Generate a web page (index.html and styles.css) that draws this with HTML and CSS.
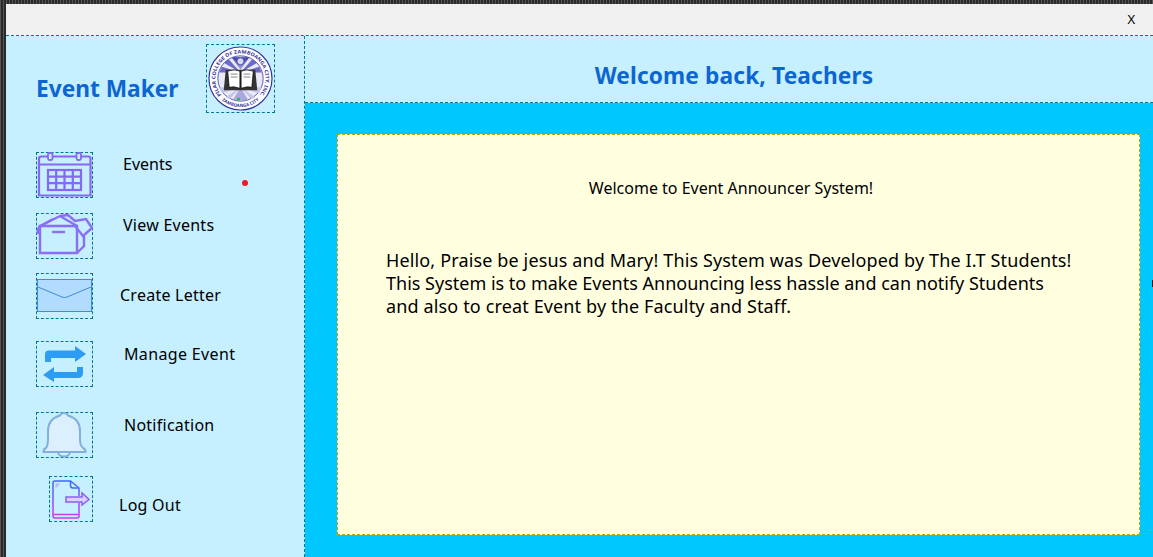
FILE: index.html
```html
<!DOCTYPE html>
<html lang="en">
<head>
<meta charset="utf-8">
<title>Event Maker</title>
<link rel="stylesheet" href="styles.css">
</head>
<body>
<div class="window">
  <div class="titlebar"><span class="close">X</span></div>
  <div class="content">
    <aside class="sidebar">
      <div class="brand">
        <h1 class="brand-name">Event Maker</h1>
        <div class="logo-box">
          <svg class="logo" viewBox="0 0 66 66">
            <defs>
              <path id="arcTop" d="M13.500 49.400A25.500 25.500 0 1 1 52.500 49.400"/>
              <path id="arcBottom" d="M12.500 53.500A29 29 0 0 0 53.500 53.500"/>
              <linearGradient id="ray" x1="0" y1="0" x2="0" y2="1">
                <stop offset="0" stop-color="#3b3ba6"/>
                <stop offset="1" stop-color="#a9a9e2"/>
              </linearGradient>
            </defs>
            <circle cx="33" cy="33" r="32" fill="#fff" stroke="#35359b" stroke-width="1.200"/>
            <circle cx="33" cy="33" r="23" fill="#e9e9f8" stroke="#35359b" stroke-width=".8"/>
            <text class="logo-text"><textPath href="#arcTop" startOffset="50%" text-anchor="middle" textLength="116" lengthAdjust="spacingAndGlyphs">PILAR COLLEGE OF ZAMBOANGA CITY, INC.</textPath></text>
            <text class="logo-text-small"><textPath href="#arcBottom" startOffset="50%" text-anchor="middle">ZAMBOANGA CITY</textPath></text>
            <path d="M33 24L24 11.500L42 11.500Z" fill="url(#ray)"/>
            <path d="M33 27L11.500 27L14 21ZM33 27L54.500 27L52 21ZM33 27L16 17L21 13.500ZM33 27L50 17L45 13.500Z" fill="#6b6bc4"/>
            <path d="M33 42L25 55L41 55Z" fill="#a9a9e0"/>
            <path d="M33 42L11.500 42L14 48ZM33 42L54.500 42L52 48ZM33 42L18 52L22 54ZM33 42L48 52L44 54Z" fill="#c4c4ec"/>
            <circle cx="33" cy="15.500" r="3.500" fill="#d9d9f2" stroke="#35359b" stroke-width=".7"/>
            <path d="M18 24H48L50 45H16Z" fill="#333"/>
            <path d="M20 25.500Q27 23 32.400 25.500V43Q26 40.500 21.500 42Z" fill="#fff" stroke="#111" stroke-width=".8"/>
            <path d="M46 25.500Q39 23 33.600 25.500V43Q40 40.500 44.500 42Z" fill="#fff" stroke="#111" stroke-width=".8"/>
            <path d="M23 28.500H30M23 31.500H30M36 28.500H43M36 31.500H43" stroke="#666" stroke-width=".8"/>
            <circle cx="31" cy="54" r="1.500" fill="#27b34a"/>
          </svg>
        </div>
      </div>
      <nav class="nav">
        <div class="nav-item item-events">
          <span class="icon-box">
            <svg class="icon" viewBox="0 0 57 46" fill="none" stroke="#8767f6" stroke-width="2.200">
              <path d="M3 43.500V6.500Q3 4.500 5.500 4.500H52Q54.500 4.500 54.500 6.500V43.500Z"/>
              <path d="M3 12.500H54.500"/>
              <rect x="12" y="1" width="4.500" height="7" rx="1.500" fill="#c6efff" stroke-width="1.800"/>
              <rect x="40.500" y="1" width="4.500" height="7" rx="1.500" fill="#c6efff" stroke-width="1.800"/>
              <rect x="12" y="18" width="33" height="20"/>
              <path d="M12 24.600H45M12 31.200H45M20.200 18V38M28.500 18V38M36.800 18V38"/>
            </svg>
          </span>
          <span class="nav-label">Events</span>
        </div>
        <div class="nav-item item-view">
          <span class="icon-box">
            <svg class="icon" viewBox="0 0 57 46" fill="none" stroke="#8b6ef6" stroke-width="2.400">
              <path d="M4 13H41V40H4Z"/>
              <path d="M41 40L48 33V23"/>
              <path d="M1 21L3 14L17 6"/>
              <path d="M3 14V21"/>
              <path d="M4 13L24 3L41 13"/>
              <path d="M24 3L32 2L39 8L50 6L56 15L47 23L39 13"/>
              <path d="M16 19H29"/>
            </svg>
          </span>
          <span class="nav-label">View Events</span>
        </div>
        <div class="nav-item item-letter">
          <span class="icon-box">
            <svg class="icon" viewBox="0 0 57 46">
              <rect x="1.500" y="6.500" width="54" height="32" fill="#b2dcff" stroke="#458ad0" stroke-width="1"/>
              <path d="M2 14L26 24Q28.500 25 31 24L55 14" fill="none" stroke="#458ad0" stroke-width="1"/>
            </svg>
          </span>
          <span class="nav-label">Create Letter</span>
        </div>
        <div class="nav-item item-manage">
          <span class="icon-box">
            <svg class="icon" viewBox="0 0 57 46" fill="#2c9cf5">
              <path d="M9 21V13Q9 9.500 13 9.500H39V5L50 13L39 21V17H15V21Z"/>
              <path d="M47 26V32Q47 37 42 37H18V41L7 34L18 26V31H41V26Z"/>
            </svg>
          </span>
          <span class="nav-label">Manage Event</span>
        </div>
        <div class="nav-item item-bell">
          <span class="icon-box">
            <svg class="icon" viewBox="0 0 57 46" fill="#dcefff" stroke="#82b0db" stroke-width="2">
              <path d="M22 40A6 4.500 0 0 0 34 40"/>
              <path d="M7.500 40Q7.500 37 10 36Q12 34 12 27V19Q12 7 24 3.500Q25 1 28 1Q31 1 32 3.500Q44 7 44 19V27Q44 34 47 36Q49.500 37 49.500 40Z"/>
            </svg>
          </span>
          <span class="nav-label">Notification</span>
        </div>
        <div class="nav-item item-logout">
          <span class="icon-box icon-box-small">
            <svg class="icon" viewBox="0 0 44 46" fill="none">
              <defs>
                <linearGradient id="docGrad" gradientUnits="userSpaceOnUse" x1="0" y1="5" x2="0" y2="42">
                  <stop offset="0" stop-color="#3c6cf6"/>
                  <stop offset="1" stop-color="#cf3cf0"/>
                </linearGradient>
              </defs>
              <path d="M30 20V12L21.500 5H6Q4 5 4 7V40Q4 42 6 42H28Q30 42 30 40V27" stroke="url(#docGrad)" stroke-width="1.500"/>
              <path d="M4 38.500H30" stroke="#cf3cf0" stroke-width="1.500"/>
              <path d="M21.500 5V9.500Q21.500 12 24 12H30" stroke="#3c6cf6" stroke-width="1.500"/>
              <path d="M6.500 7.500H11.500L6.500 12.500Z" fill="#b5b8f5"/>
              <path d="M17 21H33V17L40 23.500L33 29V26H17Z" fill="#d8d0ff" stroke="#8e5cf5" stroke-width="1.500"/>
            </svg>
          </span>
          <span class="nav-label">Log Out</span>
        </div>
      </nav>
    </aside>
    <main class="panel">
      <header class="panel-head"><h2 class="panel-title">Welcome back, Teachers</h2></header>
      <section class="panel-body">
        <div class="card">
          <p class="card-title">Welcome to Event Announcer System!</p>
          <p class="card-text">
            <span class="line line-wide">Hello, Praise be jesus and Mary! This System was Developed by The I.T Students!</span>
            <span class="line">This System is to make Events Announcing less hassle and can notify Students</span>
            <span class="line line-wide">and also to creat Event by the Faculty and Staff.</span>
          </p>
        </div>
      </section>
    </main>
  </div>
  <span class="red-dot"></span>
  <span class="edge-mark"></span>
</div>
</body>
</html>
```
FILE: styles.css
```css
* { box-sizing: border-box; }
html, body { margin: 0; padding: 0; }
body { width: 1153px; height: 557px; overflow: hidden; background: #2b2b2b; font-family: "Noto Sans", "Liberation Sans", sans-serif; color: #000; }
.window { position: relative; width: 1153px; height: 557px; display: flex; flex-direction: column; padding: 4px 0 0 6px; background-color: #2a2a2a; background-image: repeating-linear-gradient(90deg, #555 0 1px, transparent 1px 3px); }
.titlebar { height: 32px; background: #f0f0f0; display: flex; justify-content: flex-end; align-items: center; padding-right: 18px; border-bottom: 1px dashed #00788f; flex: none; }
.close { font-size: 13px; line-height: 1; }
.content { flex: 1; display: flex; min-height: 0; }
.sidebar { width: 299px; flex: none; background: #c6efff; border-right: 1px dashed #00788f; padding: 7px 0 0 30px; }
.brand { display: flex; align-items: flex-start; height: 108px; }
.brand-name { margin: 30px 0 0 0; font-size: 22.700px; line-height: 32px; font-weight: 700; color: #0c66d2; white-space: nowrap; width: 170px; }
.logo-box { width: 69px; height: 69px; margin-top: 1px; border: 1px dashed #00788f; padding: 1px; }
.logo { display: block; width: 65px; height: 65px; }
.logo-text { font-size: 5px; font-weight: 700; fill: #35359b; }
.logo-text-small { font-size: 4.500px; font-weight: 700; fill: #35359b; }
.nav { display: flex; flex-direction: column; }
.nav-item { display: flex; align-items: flex-start; height: 46px; }
.icon-box { width: 57px; height: 46px; flex: none; border: 1px dashed #00788f; }
.icon-box-small { width: 44px; margin-left: 13px; }
.icon { display: block; margin: -1px; width: calc(100% + 2px); height: calc(100% + 2px); }
.nav-label { font-size: 16px; line-height: 22px; white-space: nowrap; letter-spacing: .25px; }
.item-events { margin-top: 1px; }
.item-events .nav-label { margin: 1px 0 0 30px; letter-spacing: 0; }
.item-view { margin-top: 15px; }
.item-view .nav-label { margin: 1px 0 0 30px; }
.item-letter { margin-top: 14px; }
.item-letter .nav-label { margin: 11px 0 0 27px; }
.item-manage { margin-top: 22px; }
.item-manage .nav-label { margin: 2px 0 0 31px; letter-spacing: .35px; }
.item-bell { margin-top: 25px; }
.item-bell .nav-label { margin: 2px 0 0 31px; }
.item-logout { margin-top: 18px; }
.item-logout .nav-label { margin: 18px 0 0 26px; }
.panel { flex: 1; display: flex; flex-direction: column; min-width: 0; }
.panel-head { height: 67px; flex: none; background: #c6efff; border-bottom: 1px dashed #00788f; display: flex; justify-content: center; align-items: center; padding-top: 12px; }
.panel-title { margin: 0; font-size: 22.700px; line-height: 32px; font-weight: 700; letter-spacing: .14px; color: #0c66d2; white-space: nowrap; position: relative; left: 5px; top: 1px; }
.panel-body { flex: 1; background: #00c8ff; padding: 31px 13px 22px 32px; display: flex; }
.card { flex: 1; background: #ffffe0; border: 1px dashed #b5a800; padding: 41px 60px 0 48px; }
.card-title { margin: 0 0 49px; text-align: center; font-size: 16px; line-height: 24px; padding-right: 3px; white-space: nowrap; }
.card-text { margin: 0; font-size: 18px; line-height: 23px; white-space: nowrap; }
.line { display: block; }
.line-wide { letter-spacing: .14px; }
.red-dot { position: absolute; left: 242px; top: 180px; width: 6px; height: 6px; border-radius: 50%; background: #ed1c24; }
.edge-mark { position: absolute; left: 1152px; top: 280px; width: 1px; height: 7px; background: #1a1a1a; }
```
